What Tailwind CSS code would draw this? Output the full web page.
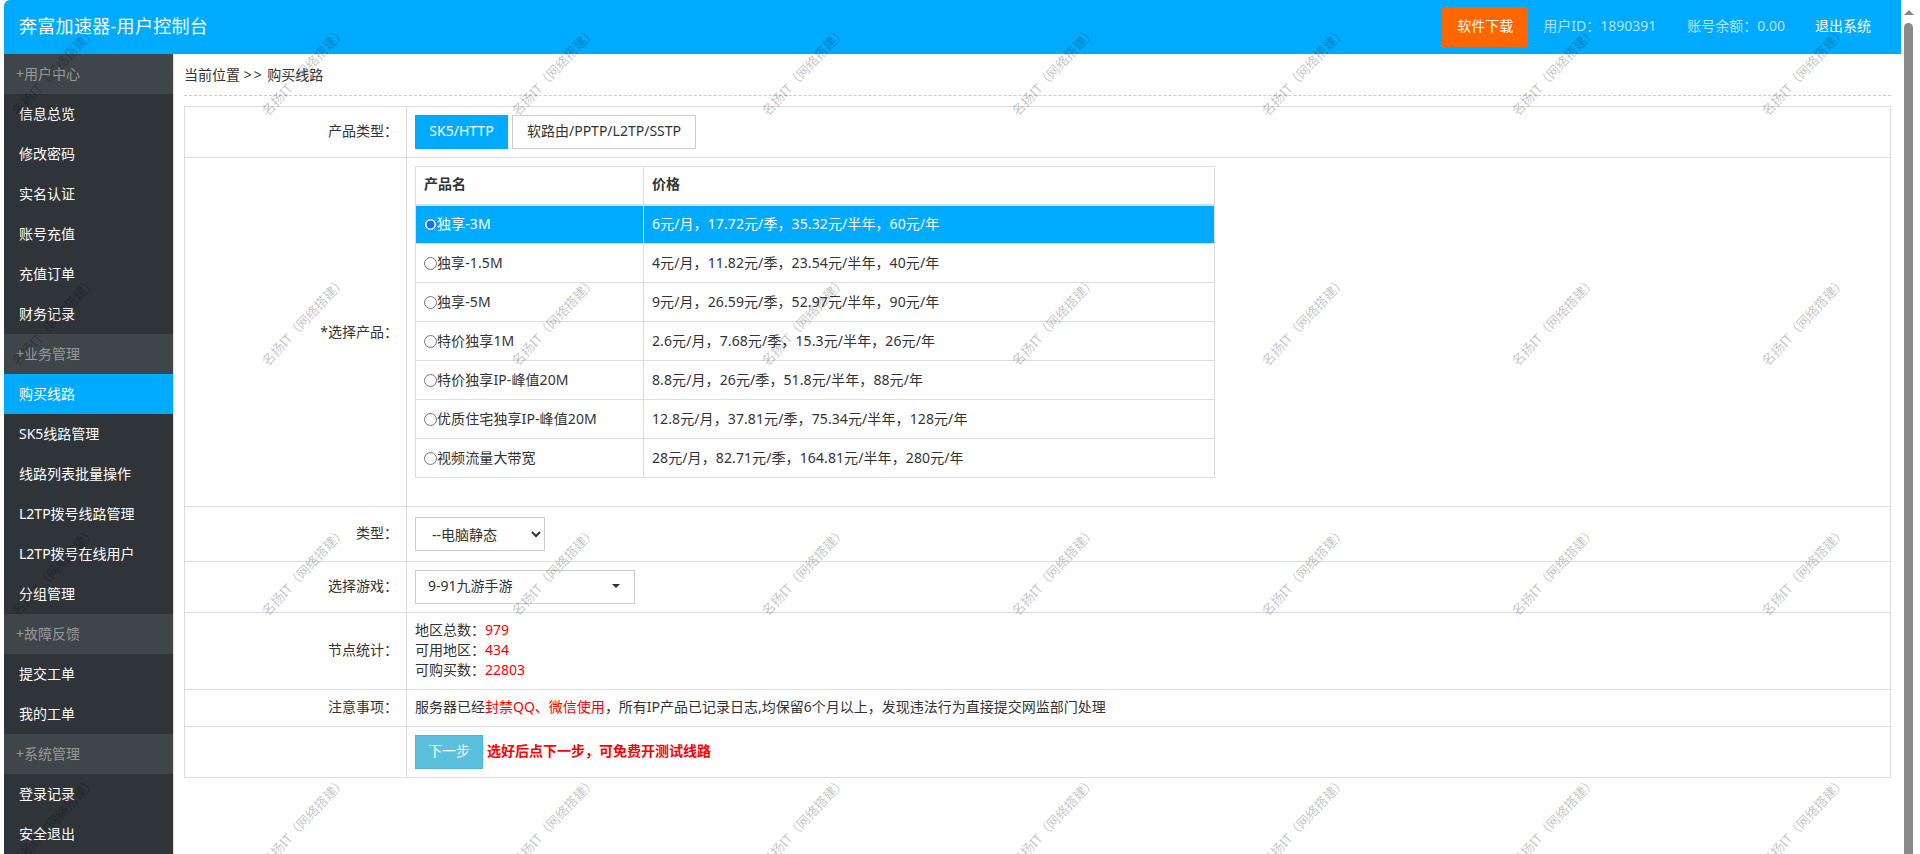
<!DOCTYPE html>
<html lang="zh-CN">
<head>
  <meta charset="UTF-8">
  <title>奔富加速器-用户控制台</title>
  <script src="https://cdn.jsdelivr.net/npm/@tailwindcss/browser@4"></script>
</head>
<body class="bg-white overflow-hidden">
<div class="relative flex h-[854px] w-[1920px] overflow-hidden bg-white pl-1 font-['Noto_Sans','Noto_Sans_CJK_SC',sans-serif] text-sm text-[#333]">

  <div class="flex w-[1897px] flex-col">
    <!-- 顶部 -->
    <header class="flex h-[54px] shrink-0 items-center rounded-tl-md bg-[#00aaff] pl-[15px] text-white">
      <h1 class="-mt-0.5 text-lg leading-none tracking-[0.3px]">奔富加速器-用户控制台</h1>
      <a class="ml-auto flex h-10 w-[86px] items-center justify-center bg-[#ff6600] pb-0.5">软件下载</a>
      <span class="-mt-0.5 ml-[15px] text-white/70">用户ID：1890391</span>
      <span class="-mt-0.5 ml-[31px] text-white/70">账号余额：0.00</span>
      <a class="-mt-0.5 ml-[30px] mr-[30px]">退出系统</a>
    </header>

    <div class="flex min-h-0 flex-1">
      <!-- 左侧菜单 -->
      <nav class="w-[170px] shrink-0 border-r border-[#ddd] bg-[#2e3438] text-white">
        <div class="flex h-10 items-center bg-[#3f4649] pb-px pl-3 text-[#999]">+用户中心</div>
        <a class="flex h-10 items-center pb-px pl-[15px]">信息总览</a>
        <a class="flex h-10 items-center pb-px pl-[15px]">修改密码</a>
        <a class="flex h-10 items-center pb-px pl-[15px]">实名认证</a>
        <a class="flex h-10 items-center pb-px pl-[15px]">账号充值</a>
        <a class="flex h-10 items-center pb-px pl-[15px]">充值订单</a>
        <a class="flex h-10 items-center pb-px pl-[15px]">财务记录</a>
        <div class="flex h-10 items-center bg-[#3f4649] pb-px pl-3 text-[#999]">+业务管理</div>
        <a class="flex h-10 items-center bg-[#00aaff] pb-px pl-[15px]">购买线路</a>
        <a class="flex h-10 items-center pb-px pl-[15px]">SK5线路管理</a>
        <a class="flex h-10 items-center pb-px pl-[15px]">线路列表批量操作</a>
        <a class="flex h-10 items-center pb-px pl-[15px]">L2TP拨号线路管理</a>
        <a class="flex h-10 items-center pb-px pl-[15px]">L2TP拨号在线用户</a>
        <a class="flex h-10 items-center pb-px pl-[15px]">分组管理</a>
        <div class="flex h-10 items-center bg-[#3f4649] pb-px pl-3 text-[#999]">+故障反馈</div>
        <a class="flex h-10 items-center pb-px pl-[15px]">提交工单</a>
        <a class="flex h-10 items-center pb-px pl-[15px]">我的工单</a>
        <div class="flex h-10 items-center bg-[#3f4649] pb-px pl-3 text-[#999]">+系统管理</div>
        <a class="flex h-10 items-center pb-px pl-[15px]">登录记录</a>
        <a class="flex h-10 items-center pb-px pl-[15px]">安全退出</a>
      </nav>

      <!-- 内容 -->
      <main class="min-w-0 flex-1 px-2.5 pt-[11px]">
        <div class="border-b border-dashed border-[#ccc] pb-2.5 leading-5">当前位置 <span class="tracking-[2px]">&gt;&gt;</span> 购买线路</div>
        <table class="mt-2.5 w-full table-fixed border-collapse">
          <colgroup><col class="w-[222px]"><col></colgroup>
          <tbody>
            <tr class="h-[51px]">
              <td class="border border-[#ddd] px-2 pb-0.5 text-right">产品类型：</td>
              <td class="border border-[#ddd] px-2">
                <div class="flex gap-1">
                  <a class="flex h-[34px] w-[93px] items-center justify-center bg-[#00aaff] pb-0.5 text-white">SK5/HTTP</a>
                  <a class="flex h-[34px] w-[184px] items-center justify-center border border-[#ccc] pb-0.5">软路由/PPTP/L2TP/SSTP</a>
                </div>
              </td>
            </tr>
            <tr class="h-[349px]">
              <td class="border border-[#ddd] px-2 text-right">*选择产品：</td>
              <td class="border border-[#ddd] p-2 align-top">
                <table class="mb-5 w-[800px] table-fixed border-collapse">
                  <colgroup><col class="w-[228px]"><col></colgroup>
                  <thead>
                    <tr class="h-[38px] font-bold">
                      <th class="border border-b-2 border-[#ddd] px-2 pb-0.5 text-left">产品名</th>
                      <th class="border border-b-2 border-[#ddd] px-2 pb-0.5 text-left">价格</th>
                    </tr>
                  </thead>
                  <tbody class="tracking-[0.1px]">
                    <tr class="h-[39px] bg-[#00aaff] text-white">
                      <td class="border border-[#ddd] px-2"><label class="flex items-center"><input type="radio" name="product" checked class="size-[13px]">独享-3M</label></td>
                      <td class="border border-[#ddd] px-2">6元/月，17.72元/季，35.32元/半年，60元/年</td>
                    </tr>
                    <tr class="h-[39px]">
                      <td class="border border-[#ddd] px-2"><label class="flex items-center"><input type="radio" name="product" class="size-[13px]">独享-1.5M</label></td>
                      <td class="border border-[#ddd] px-2">4元/月，11.82元/季，23.54元/半年，40元/年</td>
                    </tr>
                    <tr class="h-[39px]">
                      <td class="border border-[#ddd] px-2"><label class="flex items-center"><input type="radio" name="product" class="size-[13px]">独享-5M</label></td>
                      <td class="border border-[#ddd] px-2">9元/月，26.59元/季，52.97元/半年，90元/年</td>
                    </tr>
                    <tr class="h-[39px]">
                      <td class="border border-[#ddd] px-2"><label class="flex items-center"><input type="radio" name="product" class="size-[13px]">特价独享1M</label></td>
                      <td class="border border-[#ddd] px-2">2.6元/月，7.68元/季，15.3元/半年，26元/年</td>
                    </tr>
                    <tr class="h-[39px]">
                      <td class="border border-[#ddd] px-2"><label class="flex items-center"><input type="radio" name="product" class="size-[13px]">特价独享IP-峰值20M</label></td>
                      <td class="border border-[#ddd] px-2">8.8元/月，26元/季，51.8元/半年，88元/年</td>
                    </tr>
                    <tr class="h-[39px]">
                      <td class="border border-[#ddd] px-2"><label class="flex items-center"><input type="radio" name="product" class="size-[13px]">优质住宅独享IP-峰值20M</label></td>
                      <td class="border border-[#ddd] px-2">12.8元/月，37.81元/季，75.34元/半年，128元/年</td>
                    </tr>
                    <tr class="h-[39px]">
                      <td class="border border-[#ddd] px-2"><label class="flex items-center"><input type="radio" name="product" class="size-[13px]">视频流量大带宽</label></td>
                      <td class="border border-[#ddd] px-2">28元/月，82.71元/季，164.81元/半年，280元/年</td>
                    </tr>
                  </tbody>
                </table>
              </td>
            </tr>
            <tr class="h-[55px]">
              <td class="border border-[#ddd] px-2 pb-0.5 text-right">类型：</td>
              <td class="border border-[#ddd] px-2">
                <select class="h-[34px] w-[130px] border border-[#ccc] px-3">
                  <option>--电脑静态</option>
                </select>
              </td>
            </tr>
            <tr class="h-[51px]">
              <td class="border border-[#ddd] px-2 pb-0.5 text-right">选择游戏：</td>
              <td class="border border-[#ddd] px-2">
                <button class="flex h-[34px] w-[220px] items-center justify-between border border-[#ccc] pb-0.5 pl-3 pr-3.5">
                  9-91九游手游
                  <span class="size-0 border-x-4 border-t-4 border-x-transparent border-t-[#333]"></span>
                </button>
              </td>
            </tr>
            <tr class="h-[77px]">
              <td class="border border-[#ddd] px-2 pb-0.5 text-right">节点统计：</td>
              <td class="border border-[#ddd] px-2 pb-0.5 leading-5">
                <div>地区总数：<span class="text-[#ff0000]">979</span></div>
                <div>可用地区：<span class="text-[#ff0000]">434</span></div>
                <div>可购买数：<span class="text-[#ff0000]">22803</span></div>
              </td>
            </tr>
            <tr class="h-[37px]">
              <td class="border border-[#ddd] px-2 pb-0.5 text-right">注意事项：</td>
              <td class="border border-[#ddd] px-2 pb-0.5">服务器已经<span class="text-[#ff0000]">封禁QQ、微信使用</span>，所有IP产品已记录日志,均保留6个月以上，发现违法行为直接提交网监部门处理</td>
            </tr>
            <tr class="h-[51px]">
              <td class="border border-[#ddd] px-2"></td>
              <td class="border border-[#ddd] px-2">
                <div class="flex items-center gap-1">
                  <button class="h-[34px] w-[68px] border border-[#46b8da] bg-[#5bc0de] pb-0.5 text-white">下一步</button>
                  <span class="pb-0.5 font-bold text-[#ff0000]">选好后点下一步，可免费开测试线路</span>
                </div>
              </td>
            </tr>
          </tbody>
        </table>
      </main>
    </div>
  </div>

  <!-- 滚动条 -->
  <div class="flex w-[19px] flex-col items-start bg-white pl-[3px] pt-2.5">
    <span class="size-0 border-x-[5px] border-b-[5px] border-x-transparent border-b-[#888]"></span>
    <div class="mt-2 w-[9px] flex-1 rounded-t-full bg-[#8a8a8a]"></div>
  </div>

  <!-- 水印 -->
  <div id="watermark" class="pointer-events-none absolute left-[-71px] top-[-54px] grid grid-cols-[repeat(8,250px)] auto-rows-[250px]"></div>
</div>
<script>
  const watermark = document.getElementById('watermark');
  for (let i = 0; i < 32; i++) {
    const cell = document.createElement('div');
    cell.className = 'flex items-center justify-center';
    cell.innerHTML = '<span class="-rotate-[47deg] whitespace-nowrap text-[13px] text-black/25">名扬IT（网络搭建）</span>';
    watermark.appendChild(cell);
  }
</script>
</body>
</html>
